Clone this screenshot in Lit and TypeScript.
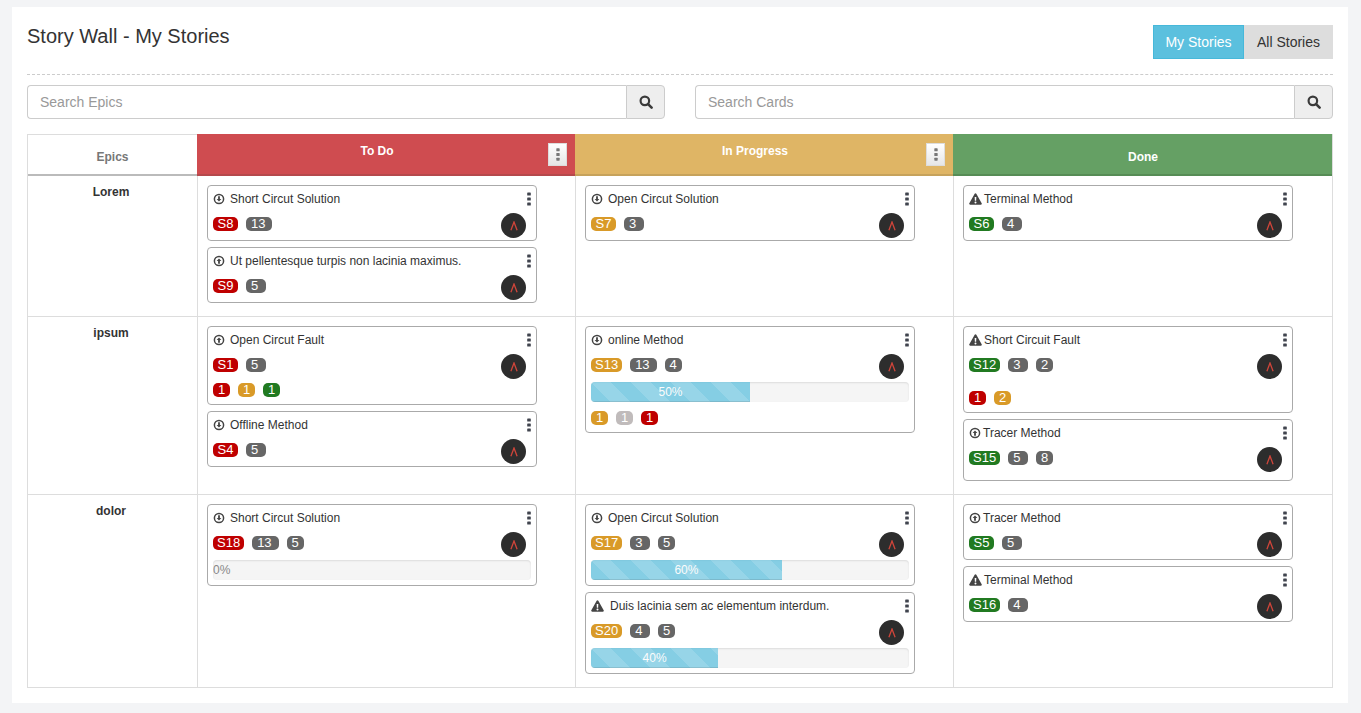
import { LitElement, html, css, svg } from "lit";
import { customElement } from "lit/decorators.js";

type Badge = [string, string];
interface Card {
  icon: "down" | "up" | "warn";
  title: string;
  badges: Badge[];
  progress?: number;
  extras?: Badge[];
  extraGap?: boolean;
  tall?: boolean;
  wideGap?: boolean;
}

const R = "r", A = "a", G = "g", D = "d", L = "l";
const b = (t: string, c: string): Badge => [t, c];

const rows: { epic: string; cols: Card[][] }[] = [
  {
    epic: "Lorem",
    cols: [
      [
        { icon: "down", title: "Short Circut Solution", badges: [b("S8", R), b("13", D)] },
        { icon: "up", title: "Ut pellentesque turpis non lacinia maximus.", badges: [b("S9", R), b("5", D)] },
      ],
      [{ icon: "down", title: "Open Circut Solution", badges: [b("S7", A), b("3", D)] }],
      [{ icon: "warn", title: "Terminal Method", badges: [b("S6", G), b("4", D)] }],
    ],
  },
  {
    epic: "ipsum",
    cols: [
      [
        { icon: "up", title: "Open Circut Fault", badges: [b("S1", R), b("5", D)], extras: [b("1", R), b("1", A), b("1", G)] },
        { icon: "down", title: "Offline Method", badges: [b("S4", R), b("5", D)] },
      ],
      [
        {
          icon: "down", title: "online Method", badges: [b("S13", A), b("13", D), b("4", D)], progress: 50,
          extras: [b("1", A), b("1", L), b("1", R)],
        },
      ],
      [
        { icon: "warn", title: "Short Circuit Fault", badges: [b("S12", G), b("3", D), b("2", D)], extras: [b("1", R), b("2", A)], extraGap: true },
        { icon: "up", title: "Tracer Method", badges: [b("S15", G), b("5", D), b("8", D)], tall: true },
      ],
    ],
  },
  {
    epic: "dolor",
    cols: [
      [{ icon: "down", title: "Short Circut Solution", badges: [b("S18", R), b("13", D), b("5", D)], progress: 0 }],
      [
        { icon: "down", title: "Open Circut Solution", badges: [b("S17", A), b("3", D), b("5", D)], progress: 60 },
        { icon: "warn", title: "Duis lacinia sem ac elementum interdum.", badges: [b("S20", A), b("4", D), b("5", D)], progress: 40, wideGap: true },
      ],
      [
        { icon: "up", title: "Tracer Method", badges: [b("S5", G), b("5", D)] },
        { icon: "warn", title: "Terminal Method", badges: [b("S16", G), b("4", D)] },
      ],
    ],
  },
];

const searchIcon = svg`<svg class="mag" viewBox="0 0 16 16"><circle cx="6.7" cy="6.7" r="4.9" fill="none" stroke="currentColor" stroke-width="2.5"/><path d="M10.4 10.4l4 4" stroke="currentColor" stroke-width="3" stroke-linecap="round"/></svg>`;

const statusIcon = (k: Card["icon"]) => {
  if (k === "warn") {
    return svg`<svg class="warn" viewBox="0 0 14 13"><path fill-rule="evenodd" fill="#444" d="M7 .4c.4 0 .7.2.9.5l5.8 10.3c.4.7-.1 1.5-.9 1.5H1.2c-.8 0-1.3-.8-.9-1.5L6.1.9C6.3.6 6.6.4 7 .4zM6.1 4.2l.2 4.2h1.4l.2-4.2zM7 9.2a1.1 1.1 0 100 2.2 1.1 1.1 0 000-2.2z"/></svg>`;
  }
  const arrow = k === "down" ? "M3.6 6h1.5V3.3h1.8V6h1.5L6 8.6z" : "M3.6 6h1.5v2.7h1.8V6h1.5L6 3.4z";
  return svg`<svg class="circ" viewBox="0 0 12 12"><circle cx="6" cy="6" r="4.6" fill="none" stroke="#444" stroke-width="1.5"/><path fill="#444" d="${arrow}"/></svg>`;
};

const kebab = svg`<svg class="keb" viewBox="0 0 4 14"><rect x=".2" y=".4" width="3.6" height="3.2" rx=".6"/><rect x=".2" y="5.4" width="3.6" height="3.2" rx=".6"/><rect x=".2" y="10.4" width="3.6" height="3.2" rx=".6"/></svg>`;

@customElement("app-root")
export class AppRoot extends LitElement {
  static styles = css`
    :host {
      display: block;
      height: 713px;
      box-sizing: border-box;
      background: #f3f4f6;
      padding: 7px 13px 10px 12px;
      font-family: "Liberation Sans", Arial, sans-serif;
      color: #333;
      font-size: 12px;
    }
    * { box-sizing: border-box; }
    .panel { background: #fff; height: 696px; padding: 18px 15px 0; }
    .head {
      display: flex;
      justify-content: space-between;
      align-items: flex-start;
      height: 50px;
      border-bottom: 1px dashed #ccc;
    }
    h1 { margin: 0; font-size: 20px; font-weight: 400; line-height: 22px; color: #333; }
    .seg { display: flex; }
    .seg span {
      width: 89px;
      height: 34px;
      line-height: 34px;
      font-size: 14px;
      text-align: center;
      background: #ddd;
      color: #333;
    }
    .seg span.on { width: 91px; background: #5bc0de; border: 1px solid #46b8da; line-height: 32px; color: #fff; }
    .searches { display: flex; gap: 30px; margin-top: 10px; }
    .search { flex: 1; display: flex; height: 34px; }
    .search .field {
      flex: 1;
      border: 1px solid #ccc;
      border-right: 0;
      border-radius: 4px 0 0 4px;
      padding: 0 12px;
      line-height: 32px;
      font-size: 14px;
      color: #999;
    }
    .search .go {
      width: 39px;
      border: 1px solid #ccc;
      border-radius: 0 4px 4px 0;
      background: #eee;
      display: flex;
      align-items: center;
      justify-content: center;
      color: #3a3a3a;
    }
    .mag { width: 14px; height: 14px; }
    .wall {
      margin-top: 15px;
      display: grid;
      grid-template-columns: 169px 378px 378px 379px;
      grid-template-rows: 42px 141px 178px 193px;
      border-left: 1px solid #ddd;
      border-right: 1px solid #ddd;
      border-bottom: 1px solid #ddd;
      height: 554px;
    }
    .hc {
      position: relative;
      border-bottom: 2px solid #bbb;
      color: #fff;
      font-weight: 700;
      text-align: center;
      line-height: 14px;
    }
    .hc.epics { color: #777; border-top: 1px solid #ddd; padding-top: 15px; }
    .hc.todo { background: #cf4c50; padding: 10px 18px 0 0; border-bottom-color: #b5494c; }
    .hc.prog { background: #dfb565; padding: 10px 18px 0 0; border-bottom-color: #c6a25b; }
    .hc.done { background: #65a064; padding: 16px 0 0 1px; border-bottom-color: #568c55; }
    .hbtn {
      position: absolute;
      top: 9px;
      right: 8px;
      width: 19px;
      height: 23px;
      background: linear-gradient(#fff, #e6e6e6);
      border: 1px solid #ddd;
      display: flex;
      align-items: center;
      justify-content: center;
    }
    .hbtn .keb { width: 4px; height: 13px; fill: #777; }
    .ec {
      font-weight: 700;
      text-align: center;
      line-height: 14px;
      padding: 9px 3px 0 0;
      border-bottom: 1px solid #ddd;
      color: #333;
    }
    .cell {
      border-left: 1px solid #ddd;
      border-bottom: 1px solid #ddd;
      padding: 9px 9px 0;
      display: flex;
      flex-direction: column;
      gap: 6px;
    }
    .last { border-bottom: 0; }
    .card {
      position: relative;
      width: 330px;
      border: 1px solid #aaa;
      border-radius: 4px;
      padding: 5px 5px 9px;
      background: #fff;
    }
    .card.has-bar { padding-bottom: 5px; }
    .card.has-extras { padding-bottom: 7px; }
    .card.tall { padding-bottom: 15px; }
    .title { display: flex; align-items: center; height: 16px; color: #333; line-height: 16px; }
    .icon { display: flex; width: 17px; flex: none; align-items: center; }
    .icon.warn-slot { width: 15px; }
    .icon.wide { width: 19px; }
    .icon.tight { width: 14px; }
    .circ { width: 12px; height: 12px; }
    .warn { width: 13px; height: 12px; }
    .card > .keb {
      position: absolute;
      top: 6px;
      right: 5px;
      width: 4px;
      height: 14px;
      fill: #40444e;
    }
    .badges { display: flex; gap: 8px; margin-top: 10px; height: 14px; }
    .badge {
      height: 14px;
      line-height: 14px;
      border-radius: 5px;
      padding: 0 4px;
      font-size: 13px;
      color: #fff;
      min-width: 17px;
      text-align: center;
    }
    .badges.main .badge:first-child { min-width: 25px; }
    .badges.main .badge:nth-child(2) { min-width: 20px; padding: 0 7px 0 5px; text-align: left; }
    .badge.r { background: #bf0000; }
    .badge.a { background: #d99a28; }
    .badge.g { background: #217a21; }
    .badge.d { background: #666; }
    .badge.l { background: #c0bbbb; }
    .badges.extra { margin-top: 11px; }
    .badges.extra.spaced { margin-top: 19px; }
    .avatar {
      position: absolute;
      right: 10px;
      top: 27px;
      width: 25px;
      height: 25px;
      border-radius: 50%;
      background: #2d2d2d;
      color: #d0453a;
      display: flex;
      align-items: center;
      justify-content: center;
    }
    .avatar svg { width: 8px; height: 10px; }
    .bar {
      position: relative;
      height: 20px;
      margin-top: 10px;
      background: #f5f5f5;
      border-radius: 4px;
      overflow: hidden;
      box-shadow: inset 0 1px 2px rgba(0, 0, 0, .1);
    }
    .fill {
      height: 100%;
      background-color: #5bc0de;
      background-image: linear-gradient(45deg, rgba(255,255,255,.15) 25%, transparent 25%, transparent 50%, rgba(255,255,255,.15) 50%, rgba(255,255,255,.15) 75%, transparent 75%, transparent);
      background-size: 40px 40px;
      opacity: .72;
      box-shadow: inset 0 -1px 0 rgba(0, 0, 0, .15);
      color: #fff;
      text-align: center;
      line-height: 20px;
    }
    .zero { position: absolute; left: 0; top: 0; line-height: 20px; color: #888; }
    .bar + .badges.extra { margin-top: 9px; }
  `;

  private iconClass(c: Card) {
    if (c.icon === "warn") return c.wideGap ? "icon wide" : "icon warn-slot";
    return c.title === "Tracer Method" ? "icon tight" : "icon";
  }

  private card(c: Card) {
    const mods = [
      c.tall ? "tall" : "",
      c.progress !== undefined ? "has-bar" : "",
      c.extras ? "has-extras" : "",
    ].join(" ");
    return html`<div class="card ${mods}">
      <div class="title"><span class=${this.iconClass(c)}>${statusIcon(c.icon)}</span>${c.title}</div>
      ${kebab}
      <div class="badges main">${c.badges.map((x) => html`<span class="badge ${x[1]}">${x[0]}</span>`)}</div>
      <div class="avatar">
        <svg viewBox="0 0 8 10"><path d="M.9 9.2 4 1l3.1 8.2" fill="none" stroke="currentColor" stroke-width="1.3"/></svg>
      </div>
      ${c.progress !== undefined
        ? html`<div class="bar">
            ${c.progress === 0
              ? html`<span class="zero">0%</span>`
              : html`<div class="fill" style="width:${c.progress}%">${c.progress}%</div>`}
          </div>`
        : ""}
      ${c.extras
        ? html`<div class="badges extra ${c.extraGap ? "spaced" : ""}">
            ${c.extras.map((x) => html`<span class="badge ${x[1]}">${x[0]}</span>`)}
          </div>`
        : ""}
    </div>`;
  }

  render() {
    return html`<div class="panel">
      <div class="head">
        <h1>Story Wall - My Stories</h1>
        <div class="seg"><span class="on">My Stories</span><span>All Stories</span></div>
      </div>
      <div class="searches">
        <div class="search"><div class="field">Search Epics</div><div class="go">${searchIcon}</div></div>
        <div class="search"><div class="field">Search Cards</div><div class="go">${searchIcon}</div></div>
      </div>
      <div class="wall">
        <div class="hc epics">Epics</div>
        <div class="hc todo">To Do<span class="hbtn">${kebab}</span></div>
        <div class="hc prog">In Progress<span class="hbtn">${kebab}</span></div>
        <div class="hc done">Done</div>
        ${rows.map(
          (r, i) => html`<div class="ec ${i === 2 ? "last" : ""}">${r.epic}</div>
            ${r.cols.map(
              (col) => html`<div class="cell ${i === 2 ? "last" : ""}">${col.map((c) => this.card(c))}</div>`
            )}`
        )}
      </div>
    </div>`;
  }
}
